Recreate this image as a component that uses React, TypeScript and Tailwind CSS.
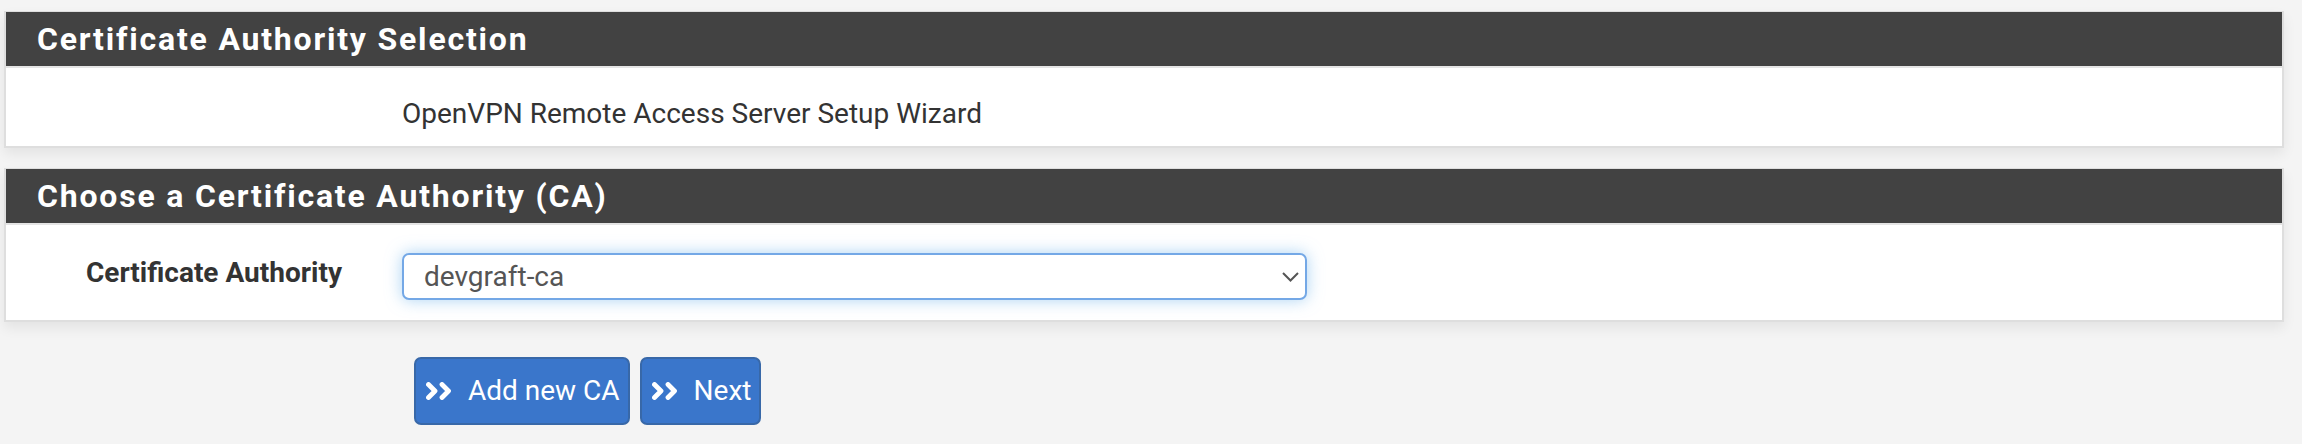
import React from "react";

function DoubleAngle() {
  return (
    <svg width="27" height="18" viewBox="0 0 27 18" fill="none" aria-hidden="true">
      <path d="M2.5 2.5 L9 9 L2.5 15.5" stroke="white" strokeWidth="4.8" strokeLinejoin="round" strokeLinecap="round" />
      <path d="M16 2.5 L22.5 9 L16 15.5" stroke="white" strokeWidth="4.8" strokeLinejoin="round" strokeLinecap="round" />
    </svg>
  );
}

function Panel({ title, children, className = "" }: { title: string; children: React.ReactNode; className?: string }) {
  return (
    <section className={`border-x-2 border-t border-b-2 border-[#dedede] bg-white shadow-[0_6px_12px_rgba(0,0,0,0.07)] ${className}`}>
      <div className="flex h-[56px] items-center border-b-2 border-[#e4e4e4] bg-[#424242] px-[31px]">
        <h2 className="text-[32px] font-bold tracking-[1.8px] text-white">{title}</h2>
      </div>
      {children}
    </section>
  );
}

export default function App() {
  return (
    <div className="min-h-[444px] bg-[#f4f4f4] pl-[4px] pr-[18px] pt-[11px] font-['Roboto',sans-serif] text-[28px] leading-[40px] text-[#333]">
      <Panel title="Certificate Authority Selection">
        <div className="flex pb-[12px] pt-[26px]">
          <div className="w-[396px] shrink-0" />
          <p>OpenVPN Remote Access Server Setup Wizard</p>
        </div>
      </Panel>

      <Panel title="Choose a Certificate Authority (CA)" className="mt-[20px]">
        <div className="flex items-start pb-[20px] pt-[28px]">
          <label className="w-[366px] shrink-0 pr-[30px] text-right font-bold" htmlFor="ca">
            Certificate Authority
          </label>
          <div className="relative ml-[30px] w-[905px]">
            <select
              id="ca"
              defaultValue="devgraft-ca"
              className="h-[47px] w-full appearance-none rounded-[7px] border-2 border-[#74a8e6] bg-white pl-[20px] text-[28px] text-[#555] shadow-[0_0_16px_rgba(102,175,233,0.55)] outline-none"
            >
              <option value="devgraft-ca">devgraft-ca</option>
            </select>
            <svg className="pointer-events-none absolute right-[8px] top-[19px]" width="17" height="10" viewBox="0 0 17 10" fill="none">
              <path d="M1 1 L8.5 8.5 L16 1" stroke="#555" strokeWidth="2" />
            </svg>
          </div>
        </div>
      </Panel>

      <div className="flex gap-[10px] pl-[410px] pt-[35px]">
        <button className="flex h-[68px] items-center gap-[15px] rounded-[7px] border-2 border-[#3868a8] bg-[#3a76cb] pl-[10px] pr-[8px] text-[28px] text-white">
          <DoubleAngle />
          Add new CA
        </button>
        <button className="flex h-[68px] items-center gap-[15px] rounded-[7px] border-2 border-[#3868a8] bg-[#3a76cb] pl-[10px] pr-[8px] text-[28px] text-white">
          <DoubleAngle />
          Next
        </button>
      </div>
    </div>
  );
}
